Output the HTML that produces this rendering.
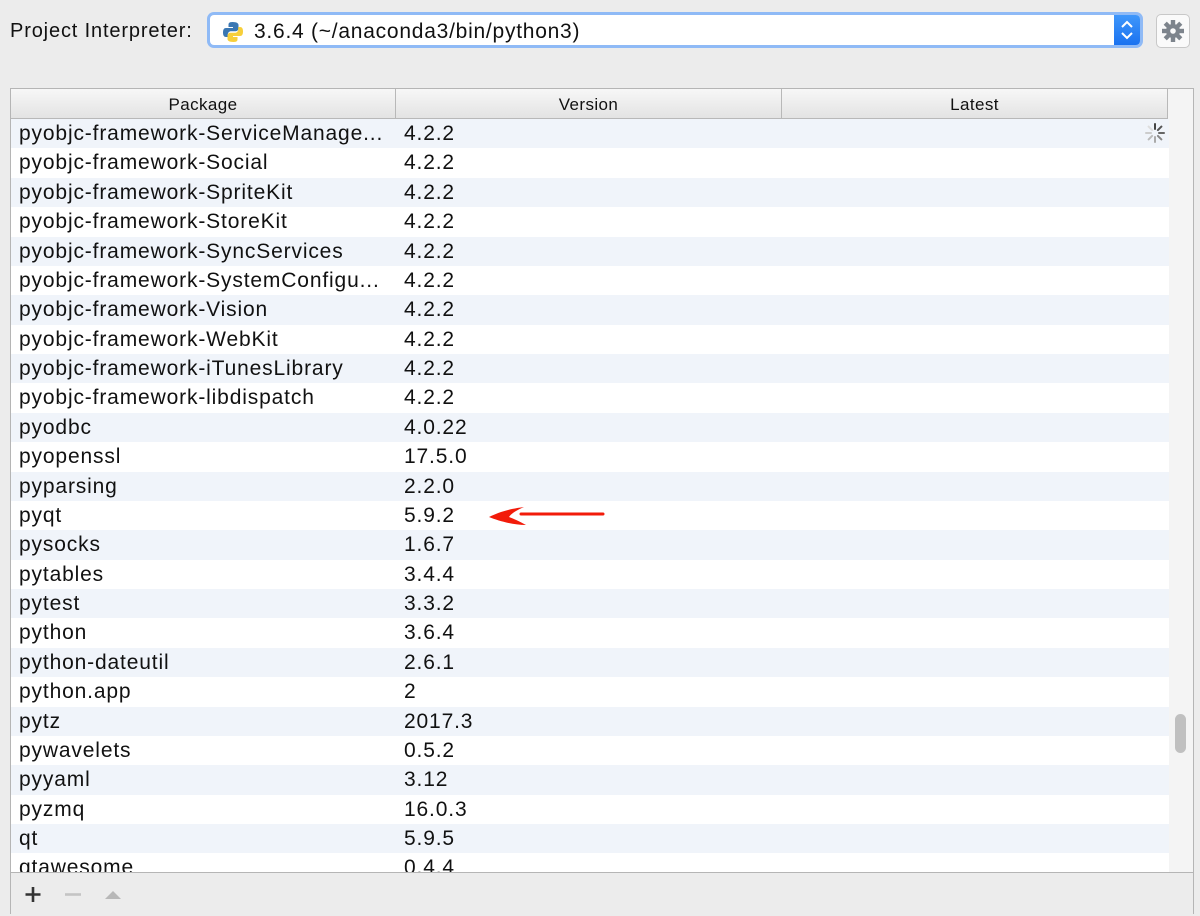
<!DOCTYPE html>
<html><head><style>
body{margin:0;width:1200px;height:916px;background:#ececec;font-family:"Liberation Sans",sans-serif;position:relative;overflow:hidden;color:#111}
.lbl{position:absolute;left:10px;top:20px;font-size:20px;letter-spacing:0.85px}
.combo{position:absolute;left:207px;top:12px;width:936px;height:36px;border-radius:7px;background:#8fbaf6}
.combo .in{position:absolute;left:3px;top:3px;right:3px;bottom:3px;background:#fff;border-radius:4px;overflow:hidden}
.combo .txt{position:absolute;left:44px;top:5px;font-size:21px;letter-spacing:0.75px}
.combo .btn{position:absolute;right:0;top:0;width:26px;height:100%;background:linear-gradient(#3f97fb,#1a72f0)}
.gear{position:absolute;left:1156px;top:14px;width:32px;height:32px;border:1px solid #c8c8c8;border-radius:5px;background:#fafafa}
.tbl{position:absolute;left:10px;top:88px;width:1182px;height:824px;border:1px solid #b5b5b5;background:#f4f4f4}
.hdr{position:absolute;left:0;top:0;width:1157px;height:29px;background:linear-gradient(#f7f7f7,#e3e3e3);border-bottom:1px solid #b8b8b8}
.hdr div{position:absolute;top:0;height:29px;line-height:31px;text-align:center;font-size:17px;letter-spacing:0.4px;border-right:1px solid #b8b8b8;box-sizing:border-box}
.rows{position:absolute;left:0;top:30px;width:1158px;height:753px;overflow:hidden;background:#fff}
.r{height:29.375px;line-height:29px;font-size:21px;letter-spacing:0.85px;position:relative}
.r:nth-child(odd){background:#f0f4fa}
.r span{position:absolute;left:8px}
.r b{font-weight:normal;position:absolute;left:393px}
.sb{position:absolute;left:1164px;top:625px;width:11px;height:39px;border-radius:6px;background:#c0c0c0}
.foot{position:absolute;left:0;top:783px;width:1182px;height:41px;border-top:1px solid #b5b5b5;background:#ececec}
</style></head><body>
<div class="lbl">Project Interpreter:</div>
<div class="combo"><div class="in">
<svg style="position:absolute;left:12px;top:6px" width="22" height="22" viewBox="0 0 22 22"><path d="M10.5 1c-4 0-4 1.7-4 3v2h4.5v1H4c-2 0-3 1.5-3 4.5S2 16 4 16h1.8v-2.5c0-2 1.5-3.3 3.4-3.3h4.5c1.5 0 2.8-1.2 2.8-2.8V4c0-1.6-1.6-3-6-3z" fill="#3a77b3"/><path d="M11.5 21c4 0 4-1.7 4-3v-2H11v-1h7c2 0 3-1.5 3-4.5S20 6 18 6h-1.8v2.5c0 2-1.5 3.3-3.4 3.3H8.3c-1.5 0-2.8 1.2-2.8 2.8V18c0 1.6 1.6 3 6 3z" fill="#f7cf3a"/></svg>
<div class="txt">3.6.4 (~/anaconda3/bin/python3)</div>
<div class="btn"><svg width="26" height="30" viewBox="0 0 26 30"><path d="M8 12l5-5 5 5M8 18l5 5 5-5" stroke="#fff" stroke-width="2" fill="none"/></svg></div>
</div></div>
<div class="gear"><svg width="32" height="32" viewBox="0 0 32 32"><g fill="#7d848c" transform="translate(16 16)"><circle r="7"/><g id="t"><rect x="-2.2" y="-11" width="4.4" height="22"/></g><use href="#t" transform="rotate(45)"/><use href="#t" transform="rotate(90)"/><use href="#t" transform="rotate(135)"/></g><circle cx="16" cy="16" r="2.8" fill="#fafafa"/></svg></div>
<div class="tbl">
<div class="hdr"><div style="left:0;width:385px">Package</div><div style="left:385px;width:386px">Version</div><div style="left:771px;width:386px">Latest</div></div>
<div class="rows">
<div class="r"><span>pyobjc-framework-ServiceManage...</span><b>4.2.2</b>
<svg style="position:absolute;left:1133px;top:3px" width="22" height="22" viewBox="0 0 22 22"><g stroke-width="2" stroke-linecap="round"><path d="M11 2v5" stroke="#444"/><path d="M17.4 4.6l-3.5 3.5" stroke="#555"/><path d="M20 11h-5" stroke="#666"/><path d="M17.4 17.4l-3.5-3.5" stroke="#888"/><path d="M11 20v-5" stroke="#aaa"/><path d="M4.6 17.4l3.5-3.5" stroke="#bbb"/><path d="M2 11h5" stroke="#ccc"/><path d="M4.6 4.6l3.5 3.5" stroke="#ddd"/></g></svg></div>
<div class="r"><span>pyobjc-framework-Social</span><b>4.2.2</b></div>
<div class="r"><span>pyobjc-framework-SpriteKit</span><b>4.2.2</b></div>
<div class="r"><span>pyobjc-framework-StoreKit</span><b>4.2.2</b></div>
<div class="r"><span>pyobjc-framework-SyncServices</span><b>4.2.2</b></div>
<div class="r"><span>pyobjc-framework-SystemConfigu...</span><b>4.2.2</b></div>
<div class="r"><span>pyobjc-framework-Vision</span><b>4.2.2</b></div>
<div class="r"><span>pyobjc-framework-WebKit</span><b>4.2.2</b></div>
<div class="r"><span>pyobjc-framework-iTunesLibrary</span><b>4.2.2</b></div>
<div class="r"><span>pyobjc-framework-libdispatch</span><b>4.2.2</b></div>
<div class="r"><span>pyodbc</span><b>4.0.22</b></div>
<div class="r"><span>pyopenssl</span><b>17.5.0</b></div>
<div class="r"><span>pyparsing</span><b>2.2.0</b></div>
<div class="r"><span>pyqt</span><b>5.9.2</b>
<svg style="position:absolute;left:470px;top:0" width="130" height="30" viewBox="0 0 130 30"><path d="M122 13H40" stroke="#f21b0a" stroke-width="3" stroke-linecap="round"/><path d="M8 16C18 11 28 8 43 6 34 10 30 13 28 16 33 18 38 20 45 24 32 24 18 20 8 16z" fill="#f21b0a"/></svg></div>
<div class="r"><span>pysocks</span><b>1.6.7</b></div>
<div class="r"><span>pytables</span><b>3.4.4</b></div>
<div class="r"><span>pytest</span><b>3.3.2</b></div>
<div class="r"><span>python</span><b>3.6.4</b></div>
<div class="r"><span>python-dateutil</span><b>2.6.1</b></div>
<div class="r"><span>python.app</span><b>2</b></div>
<div class="r"><span>pytz</span><b>2017.3</b></div>
<div class="r"><span>pywavelets</span><b>0.5.2</b></div>
<div class="r"><span>pyyaml</span><b>3.12</b></div>
<div class="r"><span>pyzmq</span><b>16.0.3</b></div>
<div class="r"><span>qt</span><b>5.9.5</b></div>
<div class="r"><span>qtawesome</span><b>0.4.4</b></div>
</div>
<div class="sb"></div>
<div class="foot">
<svg style="position:absolute;left:12px;top:12px" width="110" height="20" viewBox="0 0 110 20"><path d="M10 2v15M2.5 9.5h15" stroke="#333" stroke-width="2.6"/><path d="M42 9.5h16" stroke="#c4c4c4" stroke-width="2.6"/><path d="M82 14l8-8 8 8z" fill="#b8b8b8"/></svg>
</div>
</div>
</body></html>
